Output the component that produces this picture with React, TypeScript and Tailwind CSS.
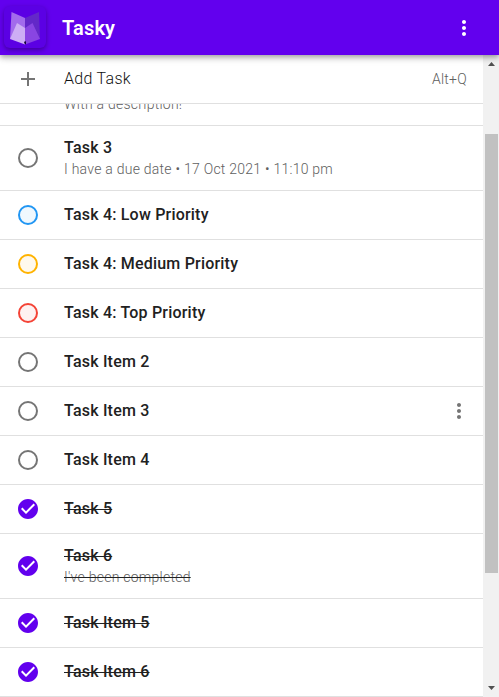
import React from 'react';

type Tone = 'default' | 'low' | 'medium' | 'top';

interface Task {
  title: string;
  note?: string;
  tone?: Tone;
  done?: boolean;
  menu?: boolean;
}

const tasks: Task[] = [
  { title: 'Task 3', note: 'I have a due date • 17 Oct 2021 • 11:10 pm' },
  { title: 'Task 4: Low Priority', tone: 'low' },
  { title: 'Task 4: Medium Priority', tone: 'medium' },
  { title: 'Task 4: Top Priority', tone: 'top' },
  { title: 'Task Item 2' },
  { title: 'Task Item 3', menu: true },
  { title: 'Task Item 4' },
  { title: 'Task 5', done: true },
  { title: 'Task 6', note: "I've been completed", done: true },
  { title: 'Task Item 5', done: true },
  { title: 'Task Item 6', done: true },
];

const ringClass: Record<Tone, string> = {
  default: 'border-[#757575]',
  low: 'border-[#2196f3] bg-[#f0f8fe]',
  medium: 'border-[#ffb300] bg-[#fff9ed]',
  top: 'border-[#f44336] bg-[#fef1f1]',
};

function MoreIcon({ className }: { className: string }) {
  return (
    <svg viewBox="0 0 24 24" className={className} fill="currentColor">
      <path d="M12 8c1.1 0 2-.9 2-2s-.9-2-2-2-2 .9-2 2 .9 2 2 2zm0 2c-1.1 0-2 .9-2 2s.9 2 2 2 2-.9 2-2-.9-2-2-2zm0 6c-1.1 0-2 .9-2 2s.9 2 2 2 2-.9 2-2-.9-2-2-2z" />
    </svg>
  );
}

function Logo() {
  return (
    <div className="ml-1 mt-1.5 size-[42px] self-start rounded-md bg-[#5b00e4] shadow-[0_2px_5px_rgba(0,0,0,0.35)]">
      <svg viewBox="0 0 42 42" className="size-[42px]">
        <path d="M7.500 6 21 12V30L6 33Z" fill="#a26bec" />
        <path d="M35 6 21 12V30L36 33Z" fill="#6328c8" />
        <path d="M13 17 21 22V38.500L6 33Z" fill="#cdaef5" />
        <path d="M28.500 17 21 22V38.500L36 33Z" fill="#8945e2" />
        <path d="M20 36 21.500 35 22 36V38L21 38.500Z" fill="#160238" />
      </svg>
    </div>
  );
}

function Marker({ done, tone = 'default' }: { done?: boolean; tone?: Tone }) {
  if (done) {
    return (
      <svg viewBox="0 0 24 24" className="size-6 shrink-0 text-[#6200ee]" fill="currentColor">
        <path d="M12 2C6.480 2 2 6.480 2 12s4.480 10 10 10 10-4.480 10-10S17.520 2 12 2zm-2 15-5-5 1.410-1.410L10 14.170l7.590-7.590L19 8l-9 9z" />
      </svg>
    );
  }
  return <span className={`mx-0.5 size-5 shrink-0 rounded-full border-2 ${ringClass[tone]}`} />;
}

function TaskRow({ task }: { task: Task }) {
  const strike = task.done ? 'line-through decoration-[#212121] decoration-1' : '';
  return (
    <li
      className={`flex shrink-0 items-center border-b border-[#e0e0e0] pl-4 pr-3 ${task.note ? 'h-[65px]' : 'h-[49px]'}`}
    >
      <Marker done={task.done} tone={task.tone} />
      <div className="ml-6 flex-1">
        <p className={`text-base font-medium tracking-[0.2px] leading-6 text-[#212121] ${strike}`}>{task.title}</p>
        {task.note && (
          <p className={`-mt-px mb-px text-sm font-light leading-5 tracking-[0.25px] text-[#606060] ${strike}`}>{task.note}</p>
        )}
      </div>
      {task.menu && <MoreIcon className="size-6 text-[#757575]" />}
    </li>
  );
}

function Scrollbar() {
  return (
    <div className="flex w-4 shrink-0 flex-col items-center bg-[#f1f1f1]">
      <svg viewBox="0 0 16 17" className="h-[17px] w-4 shrink-0" fill="#505050">
        <path d="M5 11 8.500 7 12 11Z" />
      </svg>
      <div className="ml-px mt-[62px] h-[439px] w-[13px] shrink-0 bg-[#c1c1c1]" />
      <svg viewBox="0 0 16 17" className="mt-auto h-[17px] w-4 shrink-0" fill="#505050">
        <path d="M5 6 8.500 10 12 6Z" />
      </svg>
    </div>
  );
}

export default function App() {
  return (
    <div className="flex h-[697px] w-[499px] flex-col overflow-hidden bg-white font-['Roboto',sans-serif]">
      <header className="z-10 flex h-[55px] shrink-0 items-center bg-[#6200ee] text-white shadow-[0_2px_4px_-1px_rgba(0,0,0,0.2),0_4px_5px_rgba(0,0,0,0.14),0_1px_10px_rgba(0,0,0,0.12)]">
        <Logo />
        <h1 className="ml-4 flex-1 text-xl font-semibold tracking-[0.15px]">Tasky</h1>
        <MoreIcon className="mr-[23px] size-6" />
      </header>
      <div className="flex min-h-0 flex-1">
        <main className="flex min-w-0 flex-1 flex-col">
          <div className="flex h-[49px] shrink-0 items-center border-b border-[#e0e0e0] pl-4 pr-4">
            <svg viewBox="0 0 24 24" className="size-6 text-[#757575]" fill="currentColor">
              <path d="M19 13h-6v6h-2v-6H5v-2h6V5h2v6h6v2z" />
            </svg>
            <span className="ml-6 flex-1 text-base font-light tracking-[0.3px] text-[#111111]">Add Task</span>
            <span className="text-sm font-light tracking-[0.25px] text-[#606060]">Alt+Q</span>
          </div>
          <ul className="flex flex-col">
            <li className="flex h-[22px] shrink-0 items-end overflow-hidden border-b border-[#e0e0e0] pb-[11px] pl-16">
              <p className="text-sm font-light leading-5 tracking-[0.25px] text-[#606060]">With a description!</p>
            </li>
            {tasks.map((task) => (
              <TaskRow key={task.title} task={task} />
            ))}
          </ul>
        </main>
        <Scrollbar />
      </div>
    </div>
  );
}
